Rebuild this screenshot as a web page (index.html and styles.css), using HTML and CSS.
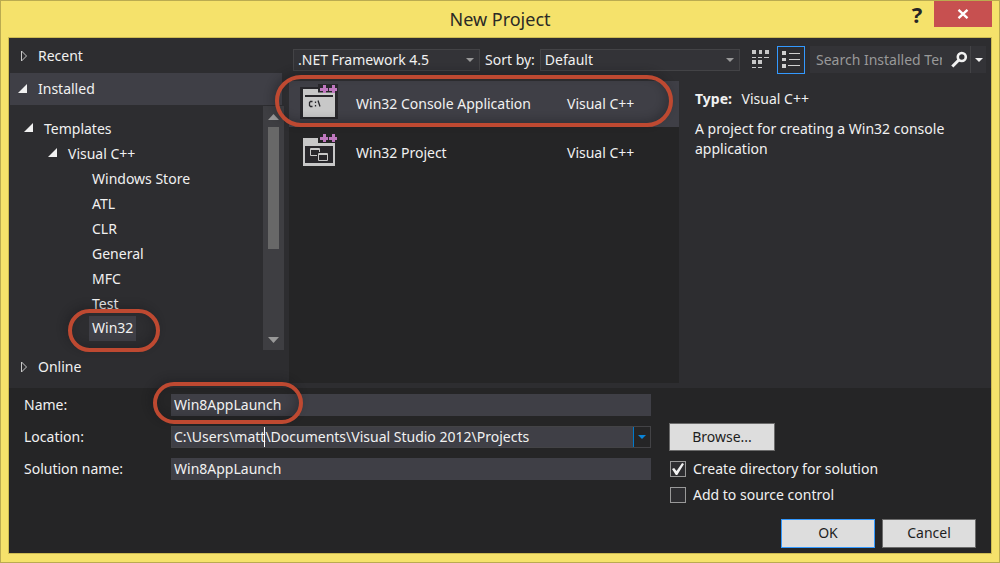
FILE: index.html
```html
<!DOCTYPE html>
<html lang="en">
<head>
<meta charset="utf-8">
<title>New Project</title>
<link rel="stylesheet" href="styles.css">
</head>
<body>
<div class="window">
  <header class="titlebar">
    <h1 class="title">New Project</h1>
    <div class="caption-buttons">
      <button class="help" type="button" aria-label="Help">?</button>
      <button class="close" type="button" aria-label="Close">
        <svg width="12" height="10" viewBox="0 0 12 10"><path d="M1.500 .8L10.500 9.200M10.500 .8L1.500 9.200" stroke="#fff" stroke-width="2.300" fill="none"/></svg>
      </button>
    </div>
  </header>
  <main class="client">
    <section class="browser">
      <nav class="sidebar">
        <button class="section" type="button"><svg class="caret" width="12" height="14" viewBox="0 0 12 14"><path d="M3.500 2v10L8.500 7z" fill="none" stroke="#c8c8c8"/></svg>Recent</button>
        <button class="section current" type="button"><svg class="caret" width="12" height="14" viewBox="0 0 12 14"><path d="M9 2v9H0z" fill="#f1f1f1"/></svg>Installed</button>
        <div class="tree-pane">
          <ul class="tree">
            <li class="level-1"><svg class="caret" width="12" height="14" viewBox="0 0 12 14"><path d="M9 1v9H0z" fill="#f1f1f1"/></svg>Templates</li>
            <li class="level-2"><svg class="caret" width="12" height="14" viewBox="0 0 12 14"><path d="M9 1v9H0z" fill="#f1f1f1"/></svg>Visual C++</li>
            <li class="level-3">Windows Store</li>
            <li class="level-3">ATL</li>
            <li class="level-3">CLR</li>
            <li class="level-3">General</li>
            <li class="level-3">MFC</li>
            <li class="level-3">Test</li>
            <li class="level-3"><span class="selected">Win32<span class="mark mark-tree"></span></span></li>
          </ul>
          <div class="scrollbar">
            <svg width="11" height="6" viewBox="0 0 11 6"><path d="M0 6L5.500 0L11 6z" fill="#999"/></svg>
            <div class="track"><div class="thumb"></div></div>
            <svg width="11" height="6" viewBox="0 0 11 6"><path d="M0 0L5.500 6L11 0z" fill="#999"/></svg>
          </div>
        </div>
        <button class="section last" type="button"><svg class="caret" width="12" height="14" viewBox="0 0 12 14"><path d="M3.500 2v10L8.500 7z" fill="none" stroke="#c8c8c8"/></svg>Online</button>
      </nav>
      <div class="content">
        <div class="toolbar">
          <div class="sorting">
            <div class="drop framework">
              <select aria-label="Framework"><option>.NET Framework 4.5</option></select>
              <svg width="8" height="4" viewBox="0 0 8 4"><path d="M0 0h8L4 4z" fill="#999"/></svg>
            </div>
            <label for="sort">Sort by:</label>
            <div class="drop sort">
              <select id="sort"><option>Default</option></select>
              <svg width="8" height="4" viewBox="0 0 8 4"><path d="M0 0h8L4 4z" fill="#999"/></svg>
            </div>
          </div>
          <div class="views">
            <button class="view" type="button" aria-label="Small icons">
              <svg width="18" height="19" viewBox="0 0 18 19"><path d="M1 0h4v4H1zM8 0h3v4H8zM14 0h4v4h-4zM1 10h4v4H1zM7 10h4v4H7z" fill="#c8c8c8"/><path d="M1 7.500h4M7 7.500h4M13 7.500h5M1 17.500h4M7 17.500h4" stroke="#c8c8c8"/></svg>
            </button>
            <button class="view active" type="button" aria-label="List">
              <svg width="18" height="18" viewBox="0 0 18 18"><path d="M0 0h4v4H0zM0 7h4v3H0zM0 13h4v4H0z" fill="#d0d0d0"/><path d="M7 2.500h11M7 8.500h11M6 14.500h12" stroke="#d0d0d0"/></svg>
            </button>
          </div>
          <div class="search">
            <input type="text" aria-label="Search" placeholder="Search Installed Templates">
            <button class="find" type="button" aria-label="Find">
              <svg width="17" height="17" viewBox="0 0 17 17"><circle cx="10.800" cy="6" r="4" fill="none" stroke="#f1f1f1" stroke-width="2.600"/><path d="M7.800 9L1.300 15.500" stroke="#f1f1f1" stroke-width="3"/></svg>
            </button>
            <button class="find-more" type="button" aria-label="Search options">
              <svg width="8" height="4" viewBox="0 0 8 4"><path d="M0 0h8L4 4z" fill="#f1f1f1"/></svg>
            </button>
          </div>
        </div>
        <div class="panes">
          <div class="list">
            <button class="item chosen" type="button">
              <svg width="40" height="36" viewBox="0 0 40 36">
                <path d="M0 4h18V1h20v8h0v27H0z" fill="#28272b"/>
                <path d="M3 6h15v3.500h17V34H3z" fill="#c8c8c8"/>
                <path d="M5 12h28v2H5z" fill="#28272b"/>
                <path d="M12.500 18.500h-2l-1 1v3l1 1h2M15.500 18.500v1.500M15.500 22v1.500M18 17.500l2 6" fill="none" stroke="#28272b" stroke-width="1.300"/>
                <path d="M23 2h3v3h2v3h-2v2h-3V8h-3V5h3zM32 2h3v3h2v3h-2v2h-3V8h-3V5h3z" fill="#bf78bf"/>
              </svg>
              <span class="item-name">Win32 Console Application</span>
              <span class="item-lang">Visual C++</span>
              <span class="mark mark-item"></span>
            </button>
            <button class="item" type="button">
              <svg width="40" height="36" viewBox="0 0 40 36">
                <path d="M3 6h15v5h17v23H3z" fill="#c8c8c8"/>
                <path d="M5 14h28v17H5z" fill="#28272b"/>
                <path d="M10.500 16.500h9v7h-9zM10 17.500h10" fill="none" stroke="#c8c8c8"/>
                <path d="M17 20h12v10H17z" fill="#28272b"/>
                <path d="M18.500 21.500h9v7h-9zM18 22.500h10" fill="none" stroke="#c8c8c8"/>
                <path d="M23 2h3v3h2v3h-2v2h-3V8h-3V5h3zM32 2h3v3h2v3h-2v2h-3V8h-3V5h3z" fill="#bf78bf"/>
              </svg>
              <span class="item-name">Win32 Project</span>
              <span class="item-lang">Visual C++</span>
            </button>
          </div>
          <aside class="details">
            <p class="type"><strong>Type:</strong> <span>Visual C++</span></p>
            <p class="description">A project for creating a Win32 console application</p>
          </aside>
        </div>
      </div>
    </section>
    <form class="form">
      <label for="name">Name:</label>
      <div class="field"><input id="name" type="text" value="Win8AppLaunch"><span class="mark mark-name"></span></div>
      <span></span>
      <label for="location">Location:</label>
      <div class="field combo">
        <input id="location" type="text" value="C:\Users\matt\Documents\Visual Studio 2012\Projects">
        <span class="text-cursor"></span>
        <button type="button" aria-label="Recent locations"><svg width="8" height="4" viewBox="0 0 8 4"><path d="M0 0h8L4 4z" fill="#0a84d8"/></svg></button>
      </div>
      <button class="button browse" type="button">Browse...</button>
      <label for="solution">Solution name:</label>
      <div class="field"><input id="solution" type="text" value="Win8AppLaunch"></div>
      <label class="check"><input type="checkbox" checked>Create directory for solution</label>
      <label class="check check-last"><input type="checkbox">Add to source control</label>
      <div class="actions">
        <button class="button primary" type="submit">OK</button>
        <button class="button" type="button">Cancel</button>
      </div>
    </form>
  </main>
</div>
</body>
</html>
```
FILE: styles.css
```css
* { box-sizing: border-box; }

body {
  margin: 0;
  font: 14px/20px "Noto Sans", "Open Sans", sans-serif;
  color: #f1f1f1;
  background: #f5e26b;
}

button, input, select {
  margin: 0;
  padding: 0;
  border: 0;
  border-radius: 0;
  background: none;
  font: inherit;
  color: inherit;
}

svg { display: block; flex: none; }
p, h1, ul { margin: 0; padding: 0; }

.window {
  display: flex;
  flex-direction: column;
  min-height: 100vh;
  padding: 0 7px 8px;
  border: 1px solid #baab50;
  background: #f5e26b;
}

.titlebar {
  display: grid;
  grid-template-columns: 1fr auto 1fr;
  height: 36px;
}
.title {
  grid-column: 2;
  font-size: 18px;
  font-weight: 400;
  line-height: 36px;
  color: #2b2a26;
}
.caption-buttons {
  display: flex;
  justify-content: flex-end;
  align-items: flex-start;
}
.help {
  width: 34px;
  font-size: 22px;
  font-weight: 700;
  line-height: 26px;
  color: #252526;
}
.close {
  display: grid;
  place-items: center;
  width: 58px;
  height: 26px;
  background: #c75050;
}

.client {
  flex: 1;
  display: flex;
  flex-direction: column;
  border: 1px solid #cdbb52;
  background: #252526;
}
.browser {
  display: grid;
  grid-template-columns: 280px minmax(0, 1fr);
  padding-bottom: 5px;
  background: #2d2d30;
}

.sidebar { display: flex; flex-direction: column; }
.section {
  display: flex;
  align-items: center;
  gap: 8px;
  height: 35px;
  padding-left: 9px;
  text-align: left;
}
.section.current {
  height: 32px;
  margin: 0 7px 0 1px;
  padding-left: 8px;
  background: #3f3f46;
}
.section.last { height: 33px; }
.tree-pane {
  display: flex;
  height: 244px;
  margin: 1px 5px 0 0;
}
.tree {
  flex: 1;
  padding-top: 10px;
  list-style: none;
}
.tree li {
  display: flex;
  align-items: center;
  gap: 8px;
  height: 25px;
}
.level-1 { padding-left: 15px; }
.level-2 { padding-left: 39px; }
.level-3 { padding-left: 80px; }
.selected {
  position: relative;
  padding: 2px 3px 3px;
  background: #3f3f46;
}
.level-3:not(:last-child) { padding-left: 83px; }
.scrollbar {
  display: flex;
  flex-direction: column;
  align-items: center;
  width: 21px;
  padding: 8px 0 7px;
  background: #3e3e42;
}
.track {
  flex: 1;
  width: 11px;
  padding: 7px 0 8px;
}
.thumb { height: 122px; background: #686868; }

.toolbar {
  display: flex;
  align-items: center;
  height: 43px;
  padding: 0 5px 0 4px;
}
.sorting {
  flex: 1;
  display: flex;
  align-items: center;
  gap: 5px;
}
.drop {
  display: grid;
  align-items: center;
  height: 22px;
  border: 1px solid #434346;
  background: #333337;
}
.framework { width: 187px; }
.sort { flex: 1; }
.drop select, .drop svg { grid-area: 1 / 1; }
.drop select {
  appearance: none;
  height: 20px;
  padding-left: 4px;
}
.drop svg { justify-self: end; margin-right: 5px; pointer-events: none; }
.views {
  display: flex;
  gap: 6px;
  margin: 0 5px 0 9px;
}
.view {
  display: grid;
  place-items: center;
  width: 28px;
  height: 28px;
}
.view:first-child { width: 22px; }
.view.active { border: 1px solid #3399ff; }
.search {
  display: flex;
  align-items: center;
  width: 176px;
  height: 27px;
  background: #333337;
}
.search input {
  flex: 1;
  min-width: 0;
  margin-left: 6px;
}
.search input::placeholder { color: #999; opacity: 1; }
.find { padding: 0 2px 0 9px; }
.find-more {
  display: grid;
  place-items: center;
  width: 16px;
  height: 27px;
  border-left: 1px solid #434346;
}

.panes {
  display: grid;
  grid-template-columns: 390px minmax(0, 1fr);
}
.list {
  display: flex;
  flex-direction: column;
  gap: 3px;
  min-height: 302px;
  background: #252526;
}
.item {
  position: relative;
  display: grid;
  grid-template-columns: 56px 211px 1fr;
  align-items: center;
  height: 46px;
  padding-left: 11px;
  text-align: left;
}
.item svg { align-self: start; margin-top: 2px; }
.item.chosen { background: #3f3f46; }
.details { padding: 8px 16px; }
.type { margin-bottom: 10px; }
.type span { margin-left: 6px; }

.form {
  display: grid;
  grid-template-columns: 147px minmax(0, 1fr) 307px;
  grid-template-rows: 22px 28px 22px 16px 29px;
  row-gap: 7px;
  align-items: center;
  padding: 6px 15px 6px;
}
.field {
  position: relative;
  display: flex;
  height: 22px;
  margin-right: 18px;
  background: #3f3f46;
}
.field input { flex: 1; min-width: 0; padding-left: 3px; }
.combo { border: 1px solid #434346; }
.combo input { padding-left: 2px; }
.combo button {
  display: grid;
  place-items: center;
  width: 17px;
  border-left: 1px solid #007acc;
  background: #252526;
}
.text-cursor {
  position: absolute;
  left: 92px;
  top: 0;
  width: 1px;
  height: 20px;
  background: #fff;
}
.button {
  width: 94px;
  height: 29px;
  border: 1px solid #6b6b6b;
  background: #dddddd;
  color: #1e1e1e;
}
.button.browse { width: 106px; height: 28px; }
.button.primary { border-color: #3399ff; }
.check {
  display: flex;
  align-items: center;
  gap: 7px;
  padding-left: 1px;
}
.check-last { grid-column: 3; }
.check input {
  appearance: none;
  display: grid;
  place-items: center;
  width: 16px;
  height: 16px;
  border: 1px solid #999;
  background: #2d2d30;
}
.check input:checked::before {
  content: "";
  width: 12px;
  height: 12px;
  background: #f1f1f1;
  clip-path: polygon(0 50%, 18% 42%, 38% 66%, 84% 0, 100% 8%, 44% 100%, 32% 100%);
}
.actions {
  grid-column: 3;
  display: flex;
  justify-content: flex-end;
  gap: 7px;
  margin-top: 17px;
}

.mark {
  position: absolute;
  border: 4px solid #be4931;
  box-shadow: -3px -3px 9px rgba(20, 20, 24, .3), inset -3px -3px 9px rgba(20, 20, 24, .3);
  pointer-events: none;
  z-index: 1;
}
.mark-item { inset: -6px 6px 0 -14px; border-radius: 26px; }
.mark-tree { inset: -7px -24px -11px -21px; border-radius: 24px; }
.mark-name { left: -18px; top: -12px; width: 150px; height: 42px; border-radius: 24px; }
```
